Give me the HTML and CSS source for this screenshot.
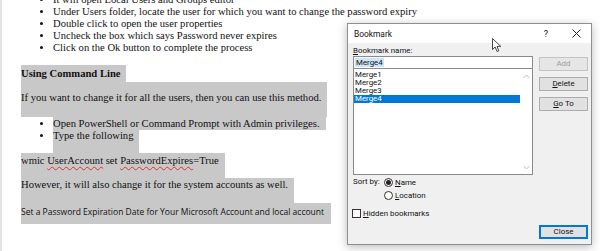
FILE: index.html
```html
<!DOCTYPE html>
<html lang="en">
<head>
  <meta charset="UTF-8" />
  <title>Bookmark</title>
  <link rel="stylesheet" href="styles.css">
</head>
<body>
  <div class="doc">
    <ul class="steps">
      <li>It will open Local Users and Groups editor</li>
      <li>Under Users folder, locate the user for which you want to change the password expiry</li>
      <li>Double click to open the user properties</li>
      <li>Uncheck the box which says Password never expires</li>
      <li>Click on the Ok button to complete the process</li>
    </ul>
    <p class="sel heading">Using Command Line</p>
    <p class="sel intro">If you want to change it for all the users, then you can use this method.</p>
    <ul class="steps picked">
      <li class="sel">Open PowerShell or Command Prompt with Admin privileges.</li>
      <li class="sel last">Type the following</li>
    </ul>
    <p class="sel cmd">wmic <span class="typo">UserAccount</span> set <span class="typo">PasswordExpires</span>=True</p>
    <p class="sel note">However, it will also change it for the system accounts as well.</p>
    <p class="sel sub">Set a Password Expiration Date for Your Microsoft Account and local account</p>
  </div>

  <div class="dialog">
    <div class="titlebar">
      <span class="title">Bookmark</span>
      <span class="help">?</span>
      <svg class="close-x" width="9" height="9" viewBox="0 0 9 9">
        <path d="M0.5 0.5 L8.5 8.5 M8.5 0.5 L0.5 8.5" stroke="#222" stroke-width="1"/>
      </svg>
    </div>
    <div class="dlg-body">
      <div class="label"><u>B</u>ookmark name:</div>
      <div class="dlg-row">
        <div class="left">
          <div class="name-input"><span class="picked-text">Merge4</span></div>
          <div class="listbox">
            <div class="items">
              <div class="item">Merge1</div>
              <div class="item">Merge2</div>
              <div class="item">Merge3</div>
              <div class="item active">Merge4</div>
            </div>
            <div class="scroll">
              <svg width="7" height="5" viewBox="0 0 7 5"><path d="M0.5 4 L3.5 1 L6.5 4" fill="none" stroke="#bbb"/></svg>
              <svg width="7" height="5" viewBox="0 0 7 5"><path d="M0.5 1 L3.5 4 L6.5 1" fill="none" stroke="#bbb"/></svg>
            </div>
          </div>
          <div class="sort">
            <span class="sort-label">Sort by:</span>
            <div class="radios">
              <div class="opt"><span class="radio on"></span><span><u>N</u>ame</span></div>
              <div class="opt"><span class="radio"></span><span><u>L</u>ocation</span></div>
            </div>
          </div>
          <div class="opt hidden-opt"><span class="check"></span><span><u>H</u>idden bookmarks</span></div>
        </div>
        <div class="right">
          <div class="btn disabled">Add</div>
          <div class="btn"><u>D</u>elete</div>
          <div class="btn"><u>G</u>o To</div>
          <div class="btn default">Close</div>
        </div>
      </div>
    </div>
  </div>

  <svg class="cursor" width="11" height="15" viewBox="0 0 11 15">
    <path d="M0.5 0.5 L0.5 11.5 L3.2 9 L5 13.5 L6.8 12.8 L5 8.4 L8.8 8.4 Z" fill="#fff" stroke="#333" stroke-width="0.9" stroke-linejoin="round"/>
  </svg>
</body>
</html>
```

FILE: styles.css
```css
:root {
  --hl: #c8c8c8;
  --panel: #f0f0f0;
  --blue: #0078d7;
}
* { box-sizing: border-box; }
html, body {
  margin: 0; padding: 0;
  width: 600px; height: 251px;
  overflow: hidden;
  background: #fff;
}
body {
  position: relative;
  border-left: 2px solid #e4e4e4;
}

/* document text */
.doc {
  padding-left: 19px;
  margin-top: -6px;
  font-family: "Liberation Serif", "Times New Roman", serif;
  font-size: 10.6px; line-height: 12px;
  color: #111;
}
.doc p { margin: 0; }
.steps {
  margin: 0; padding-left: 32px;
}
.sel { background: var(--hl); width: fit-content; padding-right: 6px; }
.heading {
  margin-top: 11px !important;
  font-weight: bold; line-height: 17px;
}
.intro { padding: 10px 6px 13px 0; }
.picked li { line-height: 13px; }
.picked li.last { line-height: 12px; padding-bottom: 11px; }
.cmd { padding: 2px 6px 11px 0; }
.typo {
  text-decoration: underline wavy #e03030;
  text-decoration-thickness: 1px;
  text-underline-offset: 2px;
}
.note { padding: 1px 6px 12px 0; }
.sub {
  font-family: "Open Sans", "Noto Sans", sans-serif;
  font-size: 8.5px; line-height: 14px;
  padding: 2px 7px 5px 0;
}

/* dialog */
.dialog {
  position: absolute; left: 345px; top: 23px;
  width: 245px; height: 222px;
  border: 1px solid #8f8f8f;
  background: var(--panel);
  box-shadow: 0 2px 9px rgba(0,0,0,0.28);
  font-family: Roboto, "Noto Sans", sans-serif;
  font-size: 7.9px; color: #111;
  display: flex; flex-direction: column;
}
.titlebar {
  height: 19px; background: #fff;
  display: flex; align-items: center;
  padding-left: 6px;
}
.title { flex: 1; font-size: 8.4px; }
.help { font-size: 9px; margin-right: 24px; }
.close-x { margin-right: 10px; }
.dlg-body {
  flex: 1;
  display: flex; flex-direction: column;
  padding: 3px 3px 5px 5px;
}
.label { height: 10px; line-height: 10px; }
.dlg-row { flex: 1; display: flex; gap: 6px; }
.left { width: 180px; }
.name-input {
  height: 13px; background: #fff;
  border: 1px solid #8a8a8a;
  padding-left: 1px; line-height: 11px;
}
.picked-text { background: #cce4f7; padding: 0 1px; }
.listbox {
  height: 106px; background: #fff;
  border: 1px solid #8a8a8a; border-top: none;
  display: flex;
}
.items { flex: 1; padding-top: 2px; }
.item { line-height: 8px; height: 8px; padding-left: 1px; }
.item.active { background: var(--blue); color: #fff; }
.scroll {
  width: 12px;
  display: flex; flex-direction: column;
  justify-content: space-between; align-items: center;
  padding: 5px 0 4px;
}
.sort { display: flex; margin-top: 2px; }
.sort-label { width: 31px; line-height: 10px; }
.radios { display: flex; flex-direction: column; gap: 3px; }
.opt { display: flex; align-items: center; height: 10px; gap: 2px; }
.radio {
  width: 9px; height: 9px; border-radius: 50%;
  border: 1px solid #333; background: #fff;
  display: flex; align-items: center; justify-content: center;
}
.radio.on::after {
  content: ""; width: 5px; height: 5px; border-radius: 50%; background: #222;
}
.hidden-opt { margin-top: 8px; margin-left: -1px; gap: 2px; }
.check {
  width: 9px; height: 9px;
  border: 1px solid #333; background: #fff;
}
.right {
  width: 49px;
  display: flex; flex-direction: column;
  padding-top: 1px;
}
.btn {
  height: 14px;
  border: 1px solid #adadad; background: #e1e1e1;
  text-align: center; line-height: 12px;
  margin-bottom: 6px;
}
.btn.disabled { color: #9c9c9c; border-color: #c4c4c4; background: #e6e6e6; }
.btn.default {
  margin-top: auto; margin-bottom: 0;
  border: 2px solid var(--blue); line-height: 10px;
}

.cursor { position: absolute; left: 490px; top: 38px; }
```
